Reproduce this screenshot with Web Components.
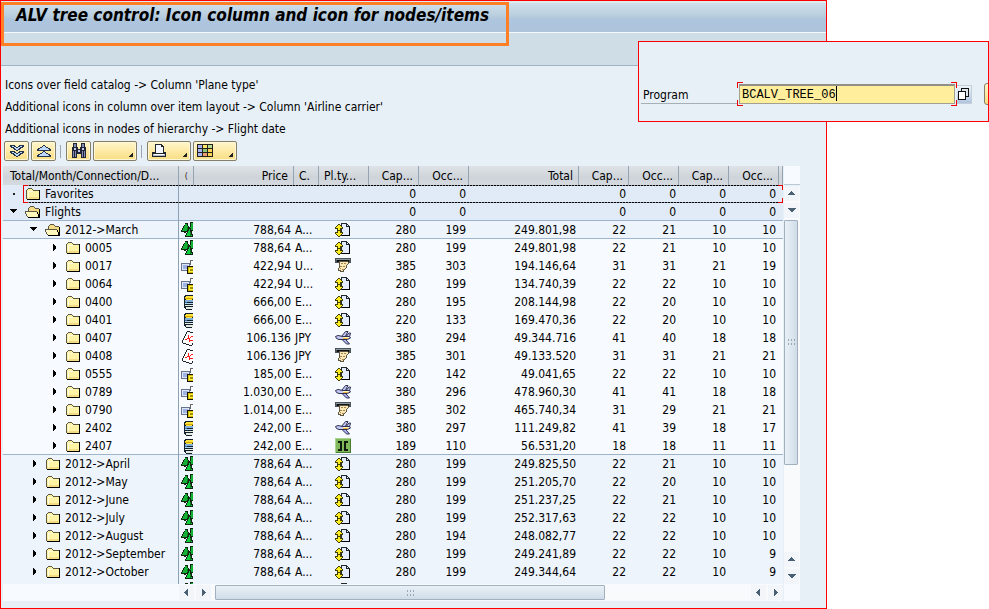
<!DOCTYPE html>
<html lang="en">
<head>
<meta charset="utf-8">
<title>ALV tree control</title>
<style>
  body {
    margin: 0;
    background: #fff;
    color: #000;
    font: 12px/18px "DejaVu Sans Condensed", "DejaVu Sans", sans-serif;
    position: relative;
  }
</style>
</head>
<body>
<sap-window>
  <sap-title slot="title">ALV tree control: Icon column and icon for nodes/items</sap-title>
  <p slot="hint">Icons over field catalog -&gt; Column 'Plane type'</p>
  <p slot="hint">Additional icons in column over item layout -&gt; Column 'Airline carrier'</p>
  <p slot="hint">Additional icons in nodes of hierarchy -&gt; Flight date</p>
  <alv-toolbar slot="toolbar"></alv-toolbar>
  <alv-tree></alv-tree>
</sap-window>
<program-popup></program-popup>

<script>
const ICONS = {
  folder: `<path d="M2 12V5l1-1 1-1h4l1 1v1h6v8H2z" fill="#fff3a6"/><path d="M2 11h12v2H2z" fill="#f4dc84"/><path d="M3 5h5v1H3zM3 6h1v6H3z" fill="#fffbe0"/><path d="M1 4h1v9H1zM2 3h1v1H2zM3 2h4v1H3zM7 3h1v1H7zM8 4h6v1H8z" fill="#5d5846"/><path d="M3 3h4v1H3zM2 4h6v1H2z" fill="#fff3a6"/><path d="M14 4h1v10h-1zM2 13h13v1H2z" fill="#000"/>`,
  open: `<path d="M3 12V4l2-2h4l1 2h4v9H4z" fill="#f4dc84"/><path d="M1 7h11l2 6H3z" fill="#fff8bd"/><path d="M3 4h1v3H3zM4 3h1v1H4zM5 2h4v1H5zM9 3h1v1H9zM10 4h4v1h-4zM0 7h12v1H0zM0 8h1v2H0zM1 10h1v2H1zM2 12h1v1H2z" fill="#5d5846"/><path d="M14 5h1v9h-1zM3 13h12v1H3zM12 8h1v2h-1zM13 10h1v3h-1z" fill="#000"/>`,
  trees: `<path d="M4 1h3v3h1v3h1v3H5v1H3v-1H0V8h1V6h1V4h1V3h1z" fill="#10240f"/><path d="M4 2h2v2h1v3h1v2H1V8h1V6h1V4h1z" fill="#12b035"/><path d="M9 0h4v9H8V5h1z" fill="#10240f"/><path d="M10 1h3v7H9V5h1z" fill="#12b035"/><path d="M7 6h3v3h1v3h1v3H4v-2h1v-2h1V8h1z" fill="#10240f"/><path d="M8 7h1v3h1v3h1v1H5v-1h1v-2h1V9h1z" fill="#0fcf3e"/><path d="M9 10h1v4H9zM6 5h1v3H6zM12 3h1v5h-1z" fill="#087a1d"/>`,
  lock: `<path d="M0.500 5.500h8v7h-8z" fill="#dce6f8" stroke="#68748f"/><path d="M2 7h5v4H2z" fill="#9eb2e3"/><path d="M9 2h1v5H9zM10 2h4v1h-4z" fill="#676767"/><path d="M6 8h8v8H6z" fill="#161403"/><path d="M7 9h7v6H7z" fill="#d6b900"/><path d="M8 10h5v4H8z" fill="#fff338"/><path d="M9 11h3v2H9z" fill="#a28c00"/>`,
  drum: `<path d="M4 1h7l2 2v10l-2 3H5l-2-2V3z" fill="#16202b"/><path d="M5 2h7v3H4zM5 5h6v1H5z" fill="#ffe23a"/><path d="M4 6h8v2H4z" fill="#7eaeda"/><path d="M4 9h8v1H4z" fill="#b2d8f1"/><path d="M4 11h8v1H4zM5 13h7v2H5z" fill="#e4eee4"/><path d="M4 4h8v1H4z" fill="#d3a500"/><path d="M4 8h2v1H4z" fill="#3d72ae"/>`,
  medical: `<path d="M6 2h2v1h6v12h-3v-1H8v-1H5v-1H2V9h1V6h2V3h1z" fill="#fff"/><path d="M6 1h3v1H6zM9 2h3v1H9zM5 2h1v2H5zM4 4h1v2H4zM3 6h1v2H3zM2 8h1v2H2zM1 10h1v3H1zM2 13h3v1H2zM5 14h3v1H5zM8 15h3v1H8zM11 13h1v2h-1zM12 3h1v2h-1z" fill="#20242a"/><path d="M4 9h2v1H4zM6 8h2v1H6zM7 5h1v3H7zM8 8h1v4H8zM9 7h1v1H9zM10 6h2v1h-2zM9 10h3v1H9z" fill="#ff1c1c"/>`,
  exchange: `<path d="M6.500 1.500h5l3 3v9h-8z" fill="#e4ecff" stroke="#24292e"/><path d="M11 2h1v2h2v1h-3z" fill="#202425"/><path d="M7 13h8v1H7zM14 5h1v9h-1z" fill="#000"/><path d="M3 2h2v1h1v1h1v1h1v2H6v3h2v2H7v1H6v1H5v1H3v-1H2v-1H1v-1H0v-2h2V7H0V5h1V4h1V3h1z" fill="#423d00"/><path d="M3 3h2v1h1v1h1v1H5v5h2v1H6v1H5v1H3v-1H2v-1H1v-1h2V6H1V5h1V4h1z" fill="#ffef20"/><path d="M3 8h2v1H3z" fill="#423d00"/>`,
  receipt: `<path d="M0 0h16v5H0z" fill="#4b5255"/><path d="M1 1h14v1H1z" fill="#899aa3"/><path d="M2 2h12v2H2z" fill="#111"/><path d="M4 3h8l2 2-2 2-1 3-2 2-1 2-5-2 2-4z" fill="#fbe9b5" stroke="#5f5641"/><path d="M6 5h2v1H6zM9 5h2v1H9zM5 8h2v1H5zM8 8h2v1H8zM5 10h1v1H5zM7 11h2v1H7z" fill="#a78655"/>`,
  plane: `<g shape-rendering="auto" stroke="#2c3052" stroke-linejoin="round"><path d="M6.500 6.500l4-5h2.500l-3 5.500z" fill="#c6c9f6"/><path d="M5.500 8l6 6h3l-5-6z" fill="#aeb4ee"/><path d="M11.500 6l2.500-3h1.500l-1 4z" fill="#c6c9f6"/><path d="M.5 6.500l2.500-1 5 1h6.500l1 1.500-3 1.500H4L1.500 8.500z" fill="#c6c9f6"/></g><path d="M8 7h6v1H8z" fill="#fff6bd"/><path d="M8 8h5v1H8z" fill="#ecae43"/>`,
  gate: `<path d="M0 0h16v15H0z" fill="#80b85c"/><path d="M0 0h16v1H0zM0 0h1v15H0z" fill="#a9d38f"/><path d="M15 1h1v14H1v-1h14z" fill="#477c31"/><path d="M3 3h4v10H3v-2h2V5H3zM9 3h4v2h-2v6h2v2H9z" fill="#101a0b"/>`,
  expand: `<path d="M1 2h5v1h1v1h2V3h1V2h5v2h-1v1h-2v1h-1v1H9v1H7V7H5V6H4V5H2V4H1zM1 8h5v1h1v1h2V9h1V8h5v2h-1v1h-2v1h-1v1H9v1H7v-1H5v-1H4v-1H2v-1H1z" fill="#25344d"/><path d="M3 3h2v1h2v1h2V4h2V3h2v1h-2v1h-1v1H9v1H7V6H6V5H5V4H3zM3 9h2v1h2v1h2v-1h2V9h2v1h-2v1h-1v1H9v1H7v-1H6v-1H5v-1H3z" fill="#c0d8ff"/>`,
  collapse: `<path d="M7 2h2v1h1v1h2v1h2v1h1v2H1V6h1V5h2V4h2V3h1zM7 8h2v1h1v1h2v1h2v1h1v2H1v-2h1v-1h2v-1h2V9h1z" fill="#25344d"/><path d="M7 3h2v1h1v1h2v1h1v1H3V6h1V5h2V4h1zM7 9h2v1h1v1h2v1h1v1H3v-1h1v-1h2v-1h1z" fill="#c0d8ff"/>`,
  find: `<path d="M2 0h4v4h1v2h2V4h1V0h4v4h1v11h-5v-4H6v4H1V4h1z" fill="#202536"/><path d="M3 1h2v3H3zM11 1h2v3h-2zM2 8h1v6H2zM4 8h1v6H4zM11 8h1v6h-1zM13 8h1v6h-1z" fill="#858bb8"/><path d="M3 5h2v2H3zM11 5h2v2h-2zM7 7h2v2H7z" fill="#c4c9ef"/>`,
  print: `<path d="M4 1h7v1h1v1h1v6h2v5H1V9h3z" fill="#20242d"/><path d="M5 2h5v2h2v6H5z" fill="#f4f7ff"/><path d="M2 11h12v2H2z" fill="#b7bdc8"/><path d="M3 11h10v1H3z" fill="#fff"/>`,
  grid: `<path d="M0 1h16v13H0z" fill="#24211a"/><path d="M1 2h4v3H1zM1 6h4v3H1zM1 10h4v3H1z" fill="#a7b4ef"/><path d="M6 2h4v3H6z" fill="#ffe867"/><path d="M11 2h4v3h-4z" fill="#b6dd94"/><path d="M6 6h4v3H6z" fill="#92c978"/><path d="M11 6h4v3h-4z" fill="#ffd452"/><path d="M6 10h4v3H6z" fill="#f09d73"/><path d="M11 10h4v3h-4z" fill="#ffd452"/>`,
  matchcode: `<path d="M5.500 2.500h7v8h-7z" fill="#dfe7ee" stroke="#111"/><path d="M2.500 5.500h7v8h-7z" fill="#fff" stroke="#111"/>`,
  down: `<path d="M5 5h7v1H5zM6 6h5v1H6zM7 7h3v1H7zM8 8h1v1H8z" fill="#000"/>`,
  right: `<path d="M8 4h1v7H8zM9 5h1v5H9zM10 6h1v3h-1z" fill="#000"/>`,
  leaf: `<path d="M8 7h2v2H8z" fill="#222"/>`
};

class AlvIcon extends HTMLElement {
  connectedCallback() {
    this.attachShadow({ mode: "open" }).innerHTML = `
      <style>
        :host { display: inline-block; width: 16px; height: 16px; flex: none; overflow: hidden; }
        svg { display: block; }
      </style>
      <svg width="16" height="16" viewBox="0 0 16 16" shape-rendering="crispEdges" aria-hidden="true">${ICONS[this.getAttribute("name")] || ""}</svg>`;
  }
}
customElements.define("alv-icon", AlvIcon);

class SapTitle extends HTMLElement {
  constructor() {
    super();
    this.attachShadow({ mode: "open" }).innerHTML = `
      <style>
        :host { display: block; position: relative; }
        h1 {
          margin: 0; padding: 0 0 5px 15px; border-top: 2px solid #dfeaf1;
          font: italic bold 17px/24px "DejaVu Sans Condensed", "DejaVu Sans", sans-serif;
          white-space: nowrap;
          background: linear-gradient(#d1e1ec, #b5cbdc 50%, #adc5df 55%, #aec4da);
          border-bottom: 1px solid #f4f8fb;
        }
        .mark { position: absolute; left: 0; top: 1px; width: 502px; height: 38px; border: 3px solid #ff7f27; }
      </style>
      <h1><slot></slot></h1><div class="mark"></div>`;
  }
}
customElements.define("sap-title", SapTitle);

class SapWindow extends HTMLElement {
  constructor() {
    super();
    this.attachShadow({ mode: "open" }).innerHTML = `
      <style>
        :host {
          display: flex; flex-direction: column; box-sizing: border-box;
          height: 100vh; margin-right: 162px; border: 1px solid #f00; background: #e8f0f7;
        }
        .strip { height: 32px; background: #cfdde7; border-bottom: 1px solid #9fb3c3; }
        .hints { padding: 8px 4px 0; line-height: 22px; }
        ::slotted(p) { margin: 0; white-space: nowrap; }
        .body { flex: 1; min-height: 0; padding: 5px 26px 7px 2px; display: flex; }
      </style>
      <slot name="title"></slot>
      <div class="strip"></div>
      <div class="hints"><slot name="hint"></slot></div>
      <slot name="toolbar"></slot>
      <div class="body"><slot></slot></div>`;
  }
}
customElements.define("sap-window", SapWindow);

class AlvToolbar extends HTMLElement {
  constructor() {
    super();
    this.attachShadow({ mode: "open" }).innerHTML = `
      <style>
        :host { display: flex; align-items: center; gap: 2px; padding: 1px 3px 0; }
        button {
          position: relative; box-sizing: border-box; width: 25px; height: 20px; padding: 0 3px;
          display: flex; align-items: center; justify-content: center;
          border: 1px solid #857e68; border-radius: 2px;
          background: linear-gradient(#fff6cb, #fdeaa5 50%, #f8dd83);
          box-shadow: inset 0 0 0 1px #fff8d8;
        }
        .menu { width: 44px; justify-content: flex-start; }
        .menu::after {
          content: ""; position: absolute; right: 3px; bottom: 3px; width: 4px; height: 4px;
          background: linear-gradient(135deg, transparent 50%, #222 50%);
        }
        i { width: 1px; height: 13px; margin: 0 3px 0 2px; background: #9aa6b0; }
      </style>
      <button aria-label="Expand"><alv-icon name="expand"></alv-icon></button>
      <button aria-label="Collapse"><alv-icon name="collapse"></alv-icon></button>
      <i></i>
      <button aria-label="Find"><alv-icon name="find"></alv-icon></button>
      <button class="menu" aria-label="Totals"></button>
      <i></i>
      <button class="menu" aria-label="Print"><alv-icon name="print"></alv-icon></button>
      <button class="menu" aria-label="Layout"><alv-icon name="grid"></alv-icon></button>`;
  }
}
customElements.define("alv-toolbar", AlvToolbar);

class TreeNode extends HTMLElement {
  connectedCallback() {
    const level = +this.getAttribute("level");
    this.attachShadow({ mode: "open" }).innerHTML = `
      <style>
        :host { display: flex; height: 17px; line-height: 17px; padding-left: ${2 + level * 20}px; }
        span { padding-left: 4px; }
        .folder { margin-left: 4px; }
      </style>
      <alv-icon name="${this.getAttribute("state")}"></alv-icon>
      <alv-icon class="folder" name="${this.getAttribute("state") === "down" ? "open" : "folder"}"></alv-icon>
      <span><slot></slot></span>`;
  }
}
customElements.define("tree-node", TreeNode);

class ScrollBar extends HTMLElement {
  connectedCallback() {
    const v = this.hasAttribute("vertical");
    const arrow = d => `<button aria-label="Scroll"><svg width="9" height="9" viewBox="0 0 9 9" shape-rendering="crispEdges"><path fill="#4b6173" d="${d}"/></svg></button>`;
    const back = arrow(v ? "M4 2h1v1h1v1h1v1h1v1H1V5h1V4h1V3h1z" : "M2 4h1V3h1V2h1V1h1v7H5V7H4V6H3V5H2z");
    const next = arrow(v ? "M1 2h8v1H8v1H7v1H6v1H4V5H3V4H2V3H1z" : "M3 1h1v1h1v1h1v1h1v1H6v1H5v1H4v1H3z");
    this.attachShadow({ mode: "open" }).innerHTML = `
      <style>
        :host { display: flex; flex-direction: ${v ? "column" : "row"}; gap: 2px; background: #f9fafb; min-width: 0; min-height: 0; }
        button { flex: none; width: 15px; height: 15px; margin: 0; padding: 0; border: 0; background: #f2f6fa;
          display: flex; align-items: center; justify-content: center; }
        .track { flex: 1; min-width: 0; min-height: 0; display: flex; flex-direction: inherit; }
        .track::after { content: ""; flex: ${v ? 26 : 27}; }
        .thumb {
          box-sizing: border-box; flex: ${v ? 74 : 73}; ${v ? "width: 14px" : "height: 15px; margin-left: 2px"};
          border: 1px solid #a0b0bf; border-radius: 1px; display: flex; align-items: center; justify-content: center;
          background: linear-gradient(${v ? "to right" : "to bottom"}, #e9f0f6, #dde7f0 50%, #cfdce8);
        }
        .grip { width: 9px; height: 8px; background: radial-gradient(circle, #98a8b6 1px, transparent 1px) 0 0 / 3px 4px; }
      </style>
      ${back}${next}<div class="track"><div class="thumb"><div class="grip"></div></div></div>${back}${next}`;
  }
}
customElements.define("scroll-bar", ScrollBar);

const X = "exchange", R = "receipt", P = "plane", T = "trees", L = "lock", D = "drum", M = "medical";
const ROWS = [
  ["top focus", 0, "leaf", "Favorites", "", "", "", "", "0", "0", "", "0", "0", "0", "0"],
  ["top line", 0, "down", "Flights", "", "", "", "", "0", "0", "", "0", "0", "0", "0"],
  ["month line", 1, "down", "2012->March", T, "788,64", "A...", X, "280", "199", "249.801,98", "22", "21", "10", "10"],
  ["", 2, "right", "0005", T, "788,64", "A...", X, "280", "199", "249.801,98", "22", "21", "10", "10"],
  ["", 2, "right", "0017", L, "422,94", "U...", R, "385", "303", "194.146,64", "31", "31", "21", "19"],
  ["", 2, "right", "0064", L, "422,94", "U...", X, "280", "199", "134.740,39", "22", "22", "10", "10"],
  ["", 2, "right", "0400", D, "666,00", "E...", X, "280", "195", "208.144,98", "22", "20", "10", "10"],
  ["", 2, "right", "0401", D, "666,00", "E...", X, "220", "133", "169.470,36", "22", "20", "10", "10"],
  ["", 2, "right", "0407", M, "106.136", "JPY", P, "380", "294", "49.344.716", "41", "40", "18", "18"],
  ["", 2, "right", "0408", M, "106.136", "JPY", R, "385", "301", "49.133.520", "31", "31", "21", "21"],
  ["", 2, "right", "0555", L, "185,00", "E...", X, "220", "142", "49.041,65", "22", "22", "10", "10"],
  ["", 2, "right", "0789", L, "1.030,00", "E...", P, "380", "296", "478.960,30", "41", "41", "18", "18"],
  ["", 2, "right", "0790", L, "1.014,00", "E...", R, "385", "302", "465.740,34", "31", "29", "21", "21"],
  ["", 2, "right", "2402", D, "242,00", "E...", P, "380", "297", "111.249,82", "41", "39", "18", "17"],
  ["line", 2, "right", "2407", D, "242,00", "E...", "gate", "189", "110", "56.531,20", "18", "18", "11", "11"],
  ["month", 1, "right", "2012->April", T, "788,64", "A...", X, "280", "199", "249.825,50", "22", "21", "10", "10"],
  ["month", 1, "right", "2012->May", T, "788,64", "A...", X, "280", "199", "251.205,70", "22", "20", "10", "10"],
  ["month", 1, "right", "2012->June", T, "788,64", "A...", X, "280", "199", "251.237,25", "22", "21", "10", "10"],
  ["month", 1, "right", "2012->July", T, "788,64", "A...", X, "280", "199", "252.317,63", "22", "22", "10", "10"],
  ["month", 1, "right", "2012->August", T, "788,64", "A...", X, "280", "194", "248.082,77", "22", "22", "10", "10"],
  ["month", 1, "right", "2012->September", T, "788,64", "A...", X, "280", "199", "249.241,89", "22", "22", "10", "9"],
  ["month", 1, "right", "2012->October", T, "788,64", "A...", X, "280", "199", "249.344,64", "22", "22", "10", "9"],
  ["month", 1, "right", "", T, "", "", X, "", "", "", "", "", "", ""]
];
const HEADS = ["Total/Month/Connection/D...", "(", "Price", "C.", "Pl.ty...", "Cap...", "Occ...", "Total", "Cap...", "Occ...", "Cap...", "Occ...", ""];
const WIDTHS = [0, 15, 100, 25, 50, 50, 50, 110, 50, 50, 50, 50, 4];

class AlvTree extends HTMLElement {
  constructor() {
    super();
    const esc = s => s.replace(/>/g, "&gt;");
    const icon = n => n ? `<alv-icon name="${n}"></alv-icon>` : "";
    const row = ([cls, level, state, label, air, price, cur, plane, ...nums]) => `
      <tr class="${cls}">
        <th scope="row"><tree-node level="${level}" state="${state}">${esc(label)}</tree-node>${cls.includes("focus") ? "<i></i>" : ""}</th>
        <td class="air">${icon(air)}</td><td>${price}</td><td class="cur">${cur}</td>
        <td class="plane">${icon(plane)}</td>${nums.map(n => `<td>${n}</td>`).join("")}<td></td>
      </tr>`;
    this.attachShadow({ mode: "open" }).innerHTML = `
      <style>
        :host { --data: 604px; flex: 1; min-width: 0; display: grid; grid-template: minmax(0, 1fr) 17px / minmax(0, 1fr) 16px; column-gap: 1px; }
        .view { overflow: hidden; background: #edf4fc; }
        table { width: 100%; table-layout: fixed; border-collapse: separate; border-spacing: 0; line-height: 17px; white-space: nowrap; }
        thead th {
          box-sizing: border-box; height: 19px; padding: 1px 5px 0; font-weight: normal; text-align: right; overflow: hidden;
          background: linear-gradient(#dfe3e7, #ced4da 60%, #d5dadf); border-right: 1px solid #94a4b2;
        }
        thead th:first-child { text-align: left; padding-left: 7px; }
        thead th:nth-child(2) { font-size: 9px; color: #40261a; }
        thead th:nth-child(4), thead th:nth-child(5) { text-align: left; }
        tbody tr { background: #f7fbff; }
        tbody tr.month { background: #edf4fc; }
        tbody tr.top { background: #e1ebf7; }
        tbody th, tbody td { box-sizing: border-box; height: 18px; padding: 1px 3px 0 0; text-align: right; font-weight: normal; }
        tbody th { text-align: left; padding-right: 0; border-right: 1px solid #8fa2b5; }
        .line th, .line td { box-shadow: inset 0 -1px #9db5cc; }
        td.air { padding: 0 0 0 2px; }
        td.air alv-icon, td.plane alv-icon { display: block; }
        td.air alv-icon { width: 12px; }
        td.cur { padding-left: 1px; text-align: left; }
        td.plane { padding: 0 0 0 16px; }
        .focus { position: relative; }
        .focus i {
          position: absolute; inset: 0 0 0 20px; pointer-events: none;
          --dash: repeating-linear-gradient(90deg, #000 0 2px, #8894a4 2px 3px);
          --red: linear-gradient(#e00, #e00);
          background: var(--red) 0 0/5px 1px, var(--red) 0 0/1px 100%, var(--red) 0 100%/5px 1px,
            var(--red) 100% 0/5px 1px, var(--red) 100% 0/1px 5px, var(--red) 100% 100%/5px 1px, var(--red) 100% 100%/1px 5px,
            var(--dash) 0 0/100% 1px, var(--dash) 0 100%/100% 1px;
          background-repeat: no-repeat;
        }
        .side { display: flex; flex-direction: column; }
        .side div { height: 18px; background: #f7fbff; border-bottom: 1px solid #b9c9d8; margin-bottom: 1px; }
        .side scroll-bar { flex: 1; }
        .foot { display: flex; background: #f7fbff; align-items: center; }
        .foot scroll-bar { width: var(--data); margin-left: auto; }
        .corner { background: #f7fbff; }
      </style>
      <div class="view">
        <table>
          <colgroup>${WIDTHS.map(w => w ? `<col style="width:${w}px">` : "<col>").join("")}</colgroup>
          <thead><tr>${HEADS.map(h => `<th scope="col">${h}</th>`).join("")}</tr></thead>
          <tbody>${ROWS.map(row).join("")}</tbody>
        </table>
      </div>
      <div class="side"><div></div><scroll-bar vertical></scroll-bar></div>
      <div class="foot"><scroll-bar></scroll-bar></div>
      <div class="corner"></div>`;
  }
}
customElements.define("alv-tree", AlvTree);

class ProgramPopup extends HTMLElement {
  constructor() {
    super();
    this.attachShadow({ mode: "open" }).innerHTML = `
      <style>
        :host {
          position: absolute; top: 41px; right: 0; width: 351px; box-sizing: border-box;
          padding: 40px 0 15px 2px; border: 1px solid #f00; background: #e8f0f7;
          display: flex; align-items: center; overflow: hidden;
        }
        label { flex: none; width: 96px; height: 20px; box-sizing: border-box; padding-left: 2px; border-bottom: 1px solid #a6aeb6; line-height: 22px; }
        .field {
          position: relative; flex: none; width: 220px; height: 24px; padding: 2px; box-sizing: border-box;
          --red: linear-gradient(#e00, #e00);
          background: var(--red) 0 0/6px 1px, var(--red) 0 0/1px 6px, var(--red) 0 100%/6px 1px, var(--red) 0 100%/1px 6px,
            var(--red) 100% 0/6px 1px, var(--red) 100% 0/1px 6px, var(--red) 100% 100%/6px 1px, var(--red) 100% 100%/1px 6px;
          background-repeat: no-repeat;
          font: 12px/16px "Liberation Mono", monospace;
        }
        input {
          display: block; box-sizing: border-box; width: 100%; height: 20px; margin: 0; padding: 0 2px; outline: 0;
          font: inherit; color: #000; border: 1px solid #a3a08e; border-top: 2px solid #8f8f88; background: #ffee9c;
        }
        .caret { position: absolute; left: calc(5px + 13ch); top: 4px; width: 1px; height: 15px; background: #000; }
        button { flex: none; box-sizing: border-box; padding: 0; }
        .match { width: 15px; height: 19px; border: 1px solid #c3cfda; border-left: 0; background: linear-gradient(#eef3f8, #afc4e0); overflow: hidden; display: flex; align-items: center; justify-content: center; }
        .more { width: 25px; height: 22px; margin-left: 12px; border: 1px solid #857e68; border-radius: 3px; background: linear-gradient(#fff6cb, #f8dd83); }
      </style>
      <label for="program">Program</label>
      <div class="field"><input id="program" value="BCALV_TREE_06"><span class="caret"></span></div>
      <button class="match" aria-label="Possible entries"><alv-icon name="matchcode"></alv-icon></button>
      <button class="more" aria-label="Create"></button>`;
  }
}
customElements.define("program-popup", ProgramPopup);
</script>
</body>
</html>
